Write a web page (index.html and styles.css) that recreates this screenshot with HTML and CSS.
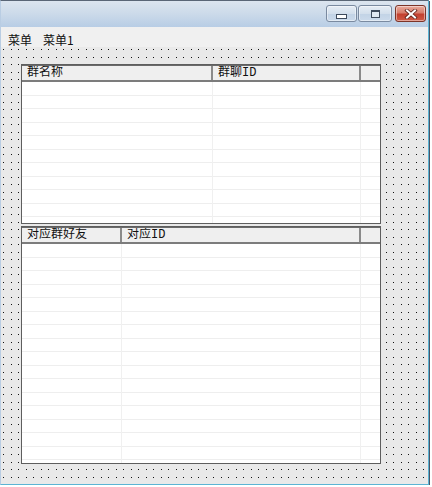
FILE: index.html
```html
<!DOCTYPE html>
<html lang="zh">
<head>
<meta charset="utf-8">
<title>窗口</title>
<link rel="stylesheet" href="styles.css">
</head>
<body>
<div class="window">
  <div class="titlebar">
    <div class="btns">
      <div class="btn min"><span class="min-bar"></span></div>
      <div class="btn max"><span class="max-box"></span></div>
      <div class="btn close">
        <svg width="14" height="10" viewBox="0 0 14 10">
          <path d="M3 1.5 L11 8.5 M11 1.5 L3 8.5" stroke="#5a2018" stroke-width="3.6" stroke-linecap="square" fill="none"/>
          <path d="M3 1.5 L11 8.5 M11 1.5 L3 8.5" stroke="#ffffff" stroke-width="2" stroke-linecap="square" fill="none"/>
        </svg>
      </div>
    </div>
  </div>
  <div class="menubar">
    <span class="menu">菜单</span>
    <span class="menu">菜单1</span>
  </div>
  <div class="canvas">
    <div class="table t1">
      <div class="thead">
        <div class="th">群名称</div>
        <div class="th">群聊ID</div>
        <div class="th last"></div>
      </div>
      <div class="tbody">
        <div class="td"></div>
        <div class="td"></div>
        <div class="td last"></div>
      </div>
    </div>
    <div class="table t2">
      <div class="thead">
        <div class="th">对应群好友</div>
        <div class="th">对应ID</div>
        <div class="th last"></div>
      </div>
      <div class="tbody">
        <div class="td"></div>
        <div class="td"></div>
        <div class="td last"></div>
      </div>
    </div>
  </div>
</div>
</body>
</html>
```

FILE: styles.css
```css
html, body {
  margin: 0;
  padding: 0;
  background: #ffffff;
}

.window {
  width: 427px;
  height: 483px;
  border-top: 1px solid #5a6676;
  border-left: 1px solid #b9cde3;
  border-right: 1px solid #5cb4d4;
  border-bottom: 1px solid #5cb4d4;
  box-shadow: 1px 1px 0 #4a5668;
  display: flex;
  flex-direction: column;
  background: #ececec;
  font-family: "Noto Sans CJK SC", "Noto Sans", sans-serif;
}

.titlebar {
  height: 26px;
  flex: none;
  background: linear-gradient(to bottom, #dce5ef 0%, #cddbea 45%, #b8cde5 100%);
  display: flex;
  justify-content: flex-end;
  align-items: flex-start;
  padding-right: 2px;
  box-sizing: border-box;
  padding-top: 4px;
}

.btns {
  display: flex;
  gap: 1px;
}

.btn {
  height: 17px;
  box-sizing: border-box;
  border: 1px solid #7a8aa0;
  border-radius: 3px;
  display: flex;
  align-items: center;
  justify-content: center;
  background: linear-gradient(to bottom, #e6edf5 0%, #d3dfec 50%, #c2d3e6 51%, #cbdaeb 100%);
  box-shadow: inset 0 0 0 1px rgba(255,255,255,0.45);
}

.btn.min { width: 31px; }
.btn.max { width: 34px; }
.btn.close {
  width: 31px;
  margin-left: 2px;
  border-color: #7c3428;
  background: linear-gradient(to bottom, #e9ab9d 0%, #d77d6b 45%, #c3402f 55%, #cf5a45 100%);
}

.min-bar {
  width: 9px;
  height: 3px;
  margin-top: 6px;
  background: #ffffff;
  border: 1px solid #3d4a5c;
}

.max-box {
  width: 7px;
  height: 5px;
  border: 1px solid #3d4a5c;
  border-top-width: 2px;
  background: #dfe8f2;
}

.menubar {
  height: 20px;
  flex: none;
  background: #f0f0f0;
  display: flex;
  align-items: center;
  padding-left: 7px;
  gap: 11px;
  font-size: 12px;
  color: #111;
}

.menu {
  line-height: 16px;
  padding-top: 6px;
}

.canvas {
  flex: 1;
  background-color: #e9e9e9;
  background-image:
    conic-gradient(from 270deg at 1px 1px, #111 0 25%, transparent 0),
    conic-gradient(from 270deg at 1px 1px, #111 0 25%, transparent 0),
    conic-gradient(from 270deg at 1px 1px, #111 0 25%, transparent 0),
    conic-gradient(from 270deg at 1px 1px, #111 0 25%, transparent 0);
  background-size: 15px 15px;
  background-position: 2px 2px, 10px 2px, 2px 10px, 10px 10px;
  padding: 17px 0 0 20px;
  display: flex;
  flex-direction: column;
  gap: 2px;
}

.table {
  width: 360px;
  box-sizing: border-box;
  border: 1px solid #5e5e5e;
  background: #ffffff;
  display: flex;
  flex-direction: column;
}

.t1 { height: 160px; }
.t2 { height: 238px; }

.t1 .thead, .t1 .tbody { grid-template-columns: 191px 148px 1fr; }
.t2 .thead, .t2 .tbody { grid-template-columns: 100px 239px 1fr; }

.thead {
  display: grid;
  height: 17px;
  flex: none;
  box-sizing: border-box;
  background: #efefef;
  border-bottom: 2px solid #7c7c7c;
  border-top: 1px solid #6a6a6a;
}

.th {
  font-family: "Liberation Mono", "Noto Sans CJK SC", monospace;
  font-size: 12px;
  line-height: 14px;
  color: #111;
  padding-left: 5px;
  border-right: 2px solid #8a8a8a;
  white-space: nowrap;
  overflow: hidden;
}

.th.last { border-right: none; }

.tbody {
  flex: 1;
  display: grid;
  background-image: repeating-linear-gradient(to bottom, transparent 0, transparent 13px, #eeeeee 13px, #eeeeee 14px, transparent 14px, transparent 26px, #eeeeee 26px, #eeeeee 27px);
}

.td {
  border-right: 1px solid #f0f0f0;
}

.td.last { border-right: none; }
```
